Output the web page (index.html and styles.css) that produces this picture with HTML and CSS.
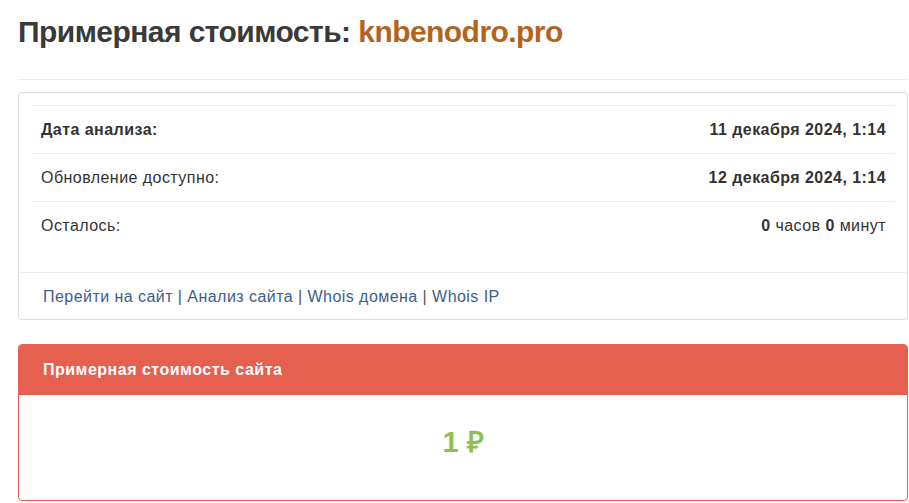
FILE: index.html
```html
<!DOCTYPE html>
<html lang="ru">
<head>
<meta charset="utf-8">
<title>Примерная стоимость: knbenodro.pro</title>
<link rel="stylesheet" href="styles.css">
</head>
<body>
<div class="page">
  <h1 class="title">Примерная стоимость: <span class="domain">knbenodro.pro</span></h1>
  <hr class="sep">
  <div class="panel">
    <div class="panel-body">
      <table class="info">
        <tr><td class="label strong">Дата анализа:</td><td class="value strong">11 декабря 2024, 1:14</td></tr>
        <tr><td class="label">Обновление доступно:</td><td class="value strong">12 декабря 2024, 1:14</td></tr>
        <tr><td class="label">Осталось:</td><td class="value"><b>0</b> часов <b>0</b> минут</td></tr>
      </table>
    </div>
    <div class="panel-footer">
      <a href="#">Перейти на сайт</a> | <a href="#">Анализ сайта</a> | <a href="#">Whois домена</a> | <a href="#">Whois IP</a>
    </div>
  </div>
  <div class="panel panel-red">
    <div class="panel-heading">Примерная стоимость сайта</div>
    <div class="panel-body price-body">
      <div class="price">1 ₽</div>
    </div>
  </div>
</div>
</body>
</html>
```
FILE: styles.css
```css
html, body {
  margin: 0;
  padding: 0;
  background: #fff;
}
body {
  font-family: "Liberation Sans", Arial, sans-serif;
  font-size: 16px;
  color: #333;
}
.page {
  padding: 12px 1px 0 18px;
}
.title {
  margin: 0;
  font-size: 30px;
  line-height: 40px;
  font-weight: bold;
  letter-spacing: -0.55px;
  color: #3a3a3a;
}
.domain {
  color: #b3641c;
}
.sep {
  border: 0;
  border-top: 1px solid #eee;
  margin: 27px 0 12px;
}
.panel {
  border: 1px solid #ddd;
  border-radius: 4px;
  background: #fff;
  margin-bottom: 24px;
}
.panel-body {
  padding: 12px 12px 11px;
}
.info {
  width: 100%;
  border-collapse: collapse;
  margin-bottom: 12px;
  letter-spacing: 0.45px;
}
.info td {
  border-top: 1px solid #eee;
  padding: 12px 9px 12px 10px;
  line-height: 23px;
}
.strong {
  font-weight: bold;
}
.value {
  text-align: right;
}
.panel-footer {
  border-top: 1px solid #eee;
  padding: 12px 24px 11px;
  line-height: 23px;
  color: #555;
  letter-spacing: 0.45px;
}
.panel-footer a {
  color: #3b5e8c;
  text-decoration: none;
}
.panel-red {
  border-color: #e5604f;
}
.panel-heading {
  background: #e5604f;
  color: #fff;
  font-weight: bold;
  font-size: 16px;
  letter-spacing: 0.5px;
  height: 50px;
  line-height: 50px;
  padding: 0 24px;
  border-radius: 3px 3px 0 0;
}
.price-body {
  padding: 29px 12px 40px;
  text-align: center;
}
.price {
  color: #8cc152;
  font-weight: bold;
  font-size: 29px;
  line-height: 36px;
}
```
